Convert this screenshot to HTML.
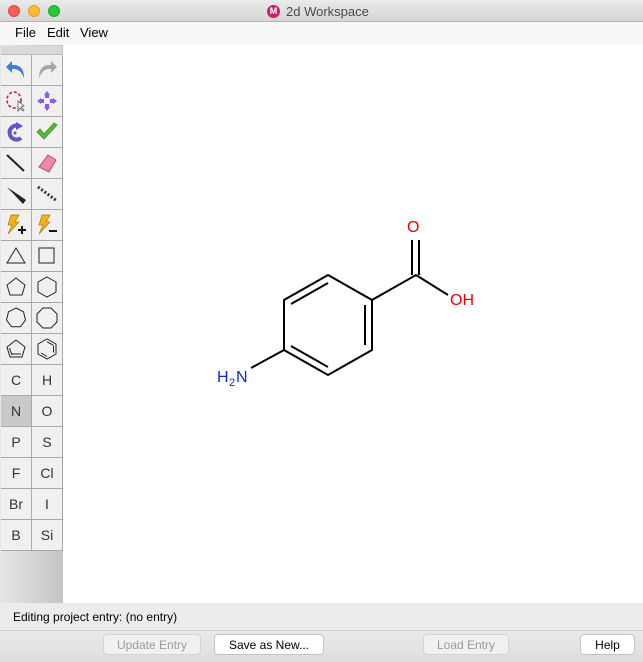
<!DOCTYPE html>
<html><head><meta charset="utf-8">
<style>
*{margin:0;padding:0;box-sizing:border-box}
body{width:643px;height:662px;overflow:hidden;background:#ececec;font-family:"Liberation Sans",sans-serif;position:relative}
#title{position:absolute;left:0;top:0;width:643px;height:22px;background:linear-gradient(#ebebeb,#d6d6d6);border-bottom:1px solid #b5b5b5}
.tl{position:absolute;top:5px;width:12px;height:12px;border-radius:50%}
#ttxt{position:absolute;left:286px;top:4px;font-size:13px;color:#4a4a4a}
#mlogo{position:absolute;left:267px;top:5px;width:13px;height:13px;border-radius:50%;background:#c8206e;color:#fff;font-size:9px;text-align:center;line-height:13px;font-weight:bold}
#menu{position:absolute;left:0;top:22px;width:643px;height:23px;background:#f7f7f7;font-size:13px}
#menu span{position:absolute;top:3px}
#canvas{position:absolute;left:63px;top:45px;width:580px;height:558px;background:#fff}
#tb{position:absolute;left:0;top:45px;width:63px;height:558px;background:linear-gradient(90deg,#e6e6e6,#c4c4c4)}
#grip{position:absolute;left:1px;top:1px;width:61px;height:9px;background:#d9d9d9;border-bottom:1px solid #bbb}
.c{position:absolute;width:31px;height:31px;background:#f0f0f0;border-right:1px solid #a9a9a9;border-bottom:1px solid #a9a9a9;font-size:14px;color:#333;text-align:center;line-height:30px}
.c svg{position:absolute;left:3px;top:3px}
#status{position:absolute;left:13px;top:610px;font-size:12px;color:#000}
#bbar{position:absolute;left:0;top:630px;width:643px;height:32px;background:linear-gradient(#e9e9e9,#dedede);border-top:1px solid #cfcfcf}
.btn{position:absolute;top:634px;height:21px;border-radius:4px;font-size:12px;text-align:center;line-height:20px;background:#fff;border:1px solid #c3c3c3;color:#000}
.dis{background:#f1f1f1;color:#9a9a9a;border-color:#d4d4d4}
</style></head><body>
<div id="title">
<div class="tl" style="left:8px;background:#fc5f57;border:1px solid #de4a41"></div>
<div class="tl" style="left:28px;background:#fdbc2e;border:1px solid #dea123"></div>
<div class="tl" style="left:48px;background:#28c840;border:1px solid #1aab29"></div>
<div id="mlogo">M</div><div id="ttxt">2d Workspace</div>
</div>
<div id="menu"><span style="left:15px">File</span><span style="left:47px">Edit</span><span style="left:80px">View</span></div>
<div id="canvas"></div>
<div id="tb"><div id="grip"></div></div>
<div style="position:absolute;left:0;top:55px">
<div class="c" style="left:1px;top:0"><svg width="24" height="24"><path d="M20 20 Q20 6 8 7 L8 3 L2 9 L8 15 L8 11 Q16 10 20 20Z" fill="#3d7fd6"/></svg></div>
<div class="c" style="left:32px;top:0"><svg width="24" height="24"><path d="M4 20 Q4 6 16 7 L16 3 L22 9 L16 15 L16 11 Q8 10 4 20Z" fill="#a6a6a6"/></svg></div>
<div class="c" style="left:1px;top:31px"><svg width="24" height="24"><ellipse cx="10" cy="11" rx="7" ry="8" fill="none" stroke="#b22" stroke-width="1.5" stroke-dasharray="3 2"/><path d="M14 12 L14 22 L16 19 L19 22 L20 21 L17 18 L20 17Z" fill="#fff" stroke="#555" stroke-width=".8"/></svg></div>
<div class="c" style="left:32px;top:31px"><svg width="24" height="24" fill="#8a5fd8"><path d="M12 2 L15 6 L9 6Z M12 22 L15 18 L9 18Z M2 12 L6 9 L6 15Z M22 12 L18 9 L18 15Z"/><rect x="10" y="6" width="4" height="3"/><rect x="10" y="15" width="4" height="3"/><rect x="6" y="10" width="3" height="4"/><rect x="15" y="10" width="3" height="4"/></svg></div>
<div class="c" style="left:1px;top:62px"><svg width="24" height="24"><path d="M17 18 A7 7 0 1 1 15 6" fill="none" stroke="#6a4fc8" stroke-width="4"/><path d="M12 2 L19 6 L12 10Z" fill="#6a4fc8"/><circle cx="11" cy="13" r="1.5" fill="#6a4fc8"/></svg></div>
<div class="c" style="left:32px;top:62px"><svg width="24" height="24"><path d="M2 12 L9 19 L22 5 L19 3 L9 14 L5 9Z" fill="#5cbb3a" stroke="#3a8a22" stroke-width=".8"/></svg></div>
<div class="c" style="left:1px;top:93px"><svg width="24" height="24"><path d="M3 4 L20 20" stroke="#222" stroke-width="2"/></svg></div>
<div class="c" style="left:32px;top:93px"><svg width="24" height="24"><path d="M4 16 L13 4 L21 9 L14 21Z" fill="#f08aa8" stroke="#b0506a"/></svg></div>
<div class="c" style="left:1px;top:124px"><svg width="24" height="24"><path d="M3 5 L22 18 L19 22Z" fill="#222"/></svg></div>
<div class="c" style="left:32px;top:124px"><svg width="24" height="24"><path d="M3 5 L22 19" stroke="#333" stroke-width="3" stroke-dasharray="2 2"/></svg></div>
<div class="c" style="left:1px;top:155px"><svg width="24" height="24"><path d="M7 2 L15 2 L11 9 L15 9 L4 21 L8 12 L4 12Z" fill="#f2b21c" stroke="#b07800" stroke-width=".7"/><path d="M14 17 H22 M18 13 V21" stroke="#111" stroke-width="2"/></svg></div>
<div class="c" style="left:32px;top:155px"><svg width="24" height="24"><path d="M7 2 L15 2 L11 9 L15 9 L4 21 L8 12 L4 12Z" fill="#f2b21c" stroke="#b07800" stroke-width=".7"/><path d="M14 18 H22" stroke="#111" stroke-width="2"/></svg></div>
<div class="c" style="left:1px;top:186px"><svg width="24" height="24"><path d="M12 4 L21 19 L3 19Z" fill="none" stroke="#222"/></svg></div>
<div class="c" style="left:32px;top:186px"><svg width="24" height="24"><rect x="4" y="4" width="15" height="15" fill="none" stroke="#222"/></svg></div>
<div class="c" style="left:1px;top:217px"><svg width="24" height="24"><path d="M12 3 L21 10 L18 20 L6 20 L3 10Z" fill="none" stroke="#222"/></svg></div>
<div class="c" style="left:32px;top:217px"><svg width="24" height="24"><path d="M12 2 L21 7 L21 17 L12 22 L3 17 L3 7Z" fill="none" stroke="#222"/></svg></div>
<div class="c" style="left:1px;top:248px"><svg width="24" height="24"><path d="M12 2 L19.5 5.8 L21.5 14 L16.5 20.8 L7.5 20.8 L2.5 14 L4.5 5.8Z" fill="none" stroke="#222"/></svg></div>
<div class="c" style="left:32px;top:248px"><svg width="24" height="24"><path d="M8 2 L16 2 L22 8 L22 16 L16 22 L8 22 L2 16 L2 8Z" fill="none" stroke="#222"/></svg></div>
<div class="c" style="left:1px;top:279px"><svg width="24" height="24"><path d="M12 3 L21 10 L18 20 L6 20 L3 10Z M7 17 L17 17 M5.5 11 L8 18" fill="none" stroke="#222"/></svg></div>
<div class="c" style="left:32px;top:279px"><svg width="24" height="24"><path d="M12 2 L21 7 L21 17 L12 22 L3 17 L3 7Z M18.5 8.5 L18.5 15.5 M12 4.8 L18 8 M6 16 L12 19.5" fill="none" stroke="#222"/></svg></div>
<div class="c" style="left:1px;top:310px">C</div><div class="c" style="left:32px;top:310px">H</div>
<div class="c" style="left:1px;top:341px;background:#c9c9c9">N</div><div class="c" style="left:32px;top:341px">O</div>
<div class="c" style="left:1px;top:372px">P</div><div class="c" style="left:32px;top:372px">S</div>
<div class="c" style="left:1px;top:403px">F</div><div class="c" style="left:32px;top:403px">Cl</div>
<div class="c" style="left:1px;top:434px">Br</div><div class="c" style="left:32px;top:434px">I</div>
<div class="c" style="left:1px;top:465px">B</div><div class="c" style="left:32px;top:465px">Si</div>
</div>
<svg style="position:absolute;left:0;top:0" width="643" height="662">
<g stroke="#000" stroke-width="2" fill="none">
<path d="M328 275 L372 300 L372 350 L328 375 L284 350 L284 300Z"/>
<path d="M291 304 L328 283 M365 305 L365 345 M291 346 L328 367" />
<path d="M372 300 L416 275 L448 295 M412 275 L412 240 M419 275 L419 240 M284 350 L251 368"/>
</g>
<text x="407" y="232" font-size="16" fill="#e00" font-family="Liberation Sans">O</text>
<text x="450" y="305" font-size="16" fill="#e00" font-family="Liberation Sans">OH</text>
<text x="217" y="382" font-size="16" fill="#0a28d8" font-family="Liberation Sans">H</text>
<text x="229" y="386" font-size="11" fill="#0a28d8" font-family="Liberation Sans">2</text>
<text x="236" y="382" font-size="16" fill="#0a28d8" font-family="Liberation Sans">N</text>
</svg>
<div id="status">Editing project entry: (no entry)</div>
<div id="bbar"></div>
<div class="btn dis" style="left:103px;width:98px">Update Entry</div>
<div class="btn" style="left:214px;width:110px">Save as New...</div>
<div class="btn dis" style="left:423px;width:86px">Load Entry</div>
<div class="btn" style="left:580px;width:55px">Help</div>
</body></html>
